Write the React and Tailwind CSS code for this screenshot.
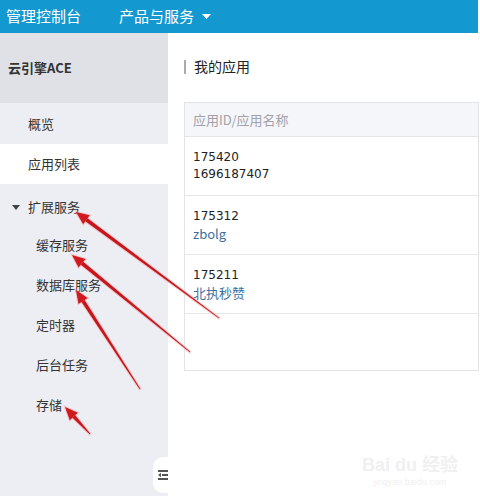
import React from 'react';

const CJK = { fontFamily: '"Noto Sans CJK SC", "Liberation Sans", sans-serif' };

// red annotation arrow: tapered shaft + head, tail -> tip
function Arrow({ x1, y1, x2, y2 }) {
  const dx = x2 - x1;
  const dy = y2 - y1;
  const len = Math.hypot(dx, dy);
  const ux = dx / len;
  const uy = dy / len;
  const nx = -uy;
  const ny = ux;
  const headLen = 13;
  const headW = 5.5;
  const bx = x2 - ux * headLen;
  const by = y2 - uy * headLen;
  const shaft = [
    [x1 + nx * 0.4, y1 + ny * 0.4],
    [bx + nx * 1.8, by + ny * 1.8],
    [bx - nx * 1.8, by - ny * 1.8],
    [x1 - nx * 0.4, y1 - ny * 0.4],
  ];
  const head = [
    [x2, y2],
    [bx + nx * headW, by + ny * headW],
    [bx - nx * headW, by - ny * headW],
  ];
  const pts = (a) => a.map((p) => p.join(',')).join(' ');
  return (
    <g>
      <polygon points={pts(shaft)} fill="#f4a0a0" opacity="0.5" stroke="#f4a0a0" strokeWidth="2" />
      <polygon points={pts(head)} fill="#f4a0a0" opacity="0.5" stroke="#f4a0a0" strokeWidth="2" />
      <polygon points={pts(shaft)} fill="#c8141b" />
      <polygon points={pts(head)} fill="#d01a1f" />
    </g>
  );
}

export default function App() {
  const rows = [
    { id: '175420', name: '1696187407', link: false },
    { id: '175312', name: 'zbolg', link: true },
    { id: '175211', name: '北执秒赞', link: true },
  ];
  const subs = ['缓存服务', '数据库服务', '定时器', '后台任务', '存储'];

  return (
    <div className="relative w-[480px] h-[496px] overflow-hidden bg-white" style={CJK}>
      {/* top bar */}
      <div className="w-[478px] h-[33px] bg-[#1399cf] flex items-center text-white text-[15px]">
        <span className="ml-[6px]">管理控制台</span>
        <span className="ml-[38px]">产品与服务</span>
        <svg width="9" height="6" viewBox="0 0 9 6" className="ml-[8px]">
          <path d="M0 0 L9 0 L4.5 5 Z" fill="#fff" />
        </svg>
      </div>

      <div className="flex h-[463px]">
        {/* sidebar */}
        <div className="relative w-[168px] flex flex-col bg-[#eceef3] text-[13px] text-[#333]">
          <div className="h-[70px] bg-[#dfe1e6] flex items-center pl-[8px] font-bold text-[#333]">云引擎ACE</div>
          <div className="h-[41px] flex items-center pl-[28px]">概览</div>
          <div className="h-[40px] bg-white flex items-center pl-[28px]">应用列表</div>
          <div className="h-[41px] pt-[5px] flex items-center pl-[12px]">
            <svg width="8" height="5" viewBox="0 0 8 5">
              <path d="M0 0 L8 0 L4 5 Z" fill="#444" />
            </svg>
            <span className="ml-[8px]">扩展服务</span>
          </div>
          {subs.map((s) => (
            <div key={s} className="h-[40px] flex items-center pl-[36px]">{s}</div>
          ))}
          <div className="absolute left-[153px] top-[424px] w-[18px] h-[36px] rounded-l-[10px] bg-white flex items-center justify-end pr-[3px]">
            <svg width="10" height="12" viewBox="0 0 10 12">
              <rect x="0" y="1" width="10" height="2" fill="#555" />
              <rect x="4" y="5" width="6" height="2" fill="#555" />
              <path d="M0 6 L3 3.8 L3 8.2 Z" fill="#555" />
              <rect x="0" y="9" width="10" height="2" fill="#555" />
            </svg>
          </div>
        </div>

        {/* main */}
        <div className="flex-1 pl-[16px]">
          <div className="mt-[24px] h-[19px] flex items-center">
            <div className="w-[2px] h-[14px] bg-[#aaa]" />
            <span className="ml-[8px] text-[14px] text-[#222]">我的应用</span>
          </div>
          <div className="mt-[26px] w-[295px] border border-[#e3e4e8] text-[13px]">
            <div className="h-[34px] bg-[#f5f6f9] border-b border-[#e3e4e8] flex items-center pl-[8px] text-[#a2a2a8]">
              应用ID/应用名称
            </div>
            {rows.map((r) => (
              <div key={r.id} className="h-[59px] border-b border-[#e6e7ea] flex flex-col justify-center pl-[8px] leading-[17px]">
                <span className="text-[#222]" style={{ fontFamily: '"DejaVu Sans", "Noto Sans CJK SC", sans-serif', fontSize: 12 }}>{r.id}</span>
                <span className={r.link ? 'text-[#3f6f9e]' : 'text-[#222]'} style={r.link ? undefined : { fontFamily: '"DejaVu Sans", sans-serif', fontSize: 12 }}>
                  {r.name}
                </span>
              </div>
            ))}
            <div className="h-[56px]" />
          </div>
        </div>
      </div>

      {/* watermark */}
      <div className="absolute left-[362px] top-[455px] flex flex-col items-center text-[#f0f0f0] select-none">
        <span className="text-[18px] font-bold leading-[20px]" style={{ fontFamily: '"Liberation Sans", "Noto Sans CJK SC", sans-serif' }}>Bai du 经验</span>
        <span className="text-[9px] leading-[12px] mt-[1px]" style={{ fontFamily: '"Liberation Sans", sans-serif' }}>jingyan.baidu.com</span>
      </div>

      {/* annotation arrows */}
      <svg className="absolute left-0 top-0 pointer-events-none" width="480" height="496">
        <Arrow x1={219} y1={318} x2={76} y2={212} />
        <Arrow x1={190} y1={352} x2={72} y2={255} />
        <Arrow x1={140} y1={389} x2={76} y2={290} />
        <Arrow x1={90} y1={434} x2={65} y2={407} />
      </svg>
    </div>
  );
}
